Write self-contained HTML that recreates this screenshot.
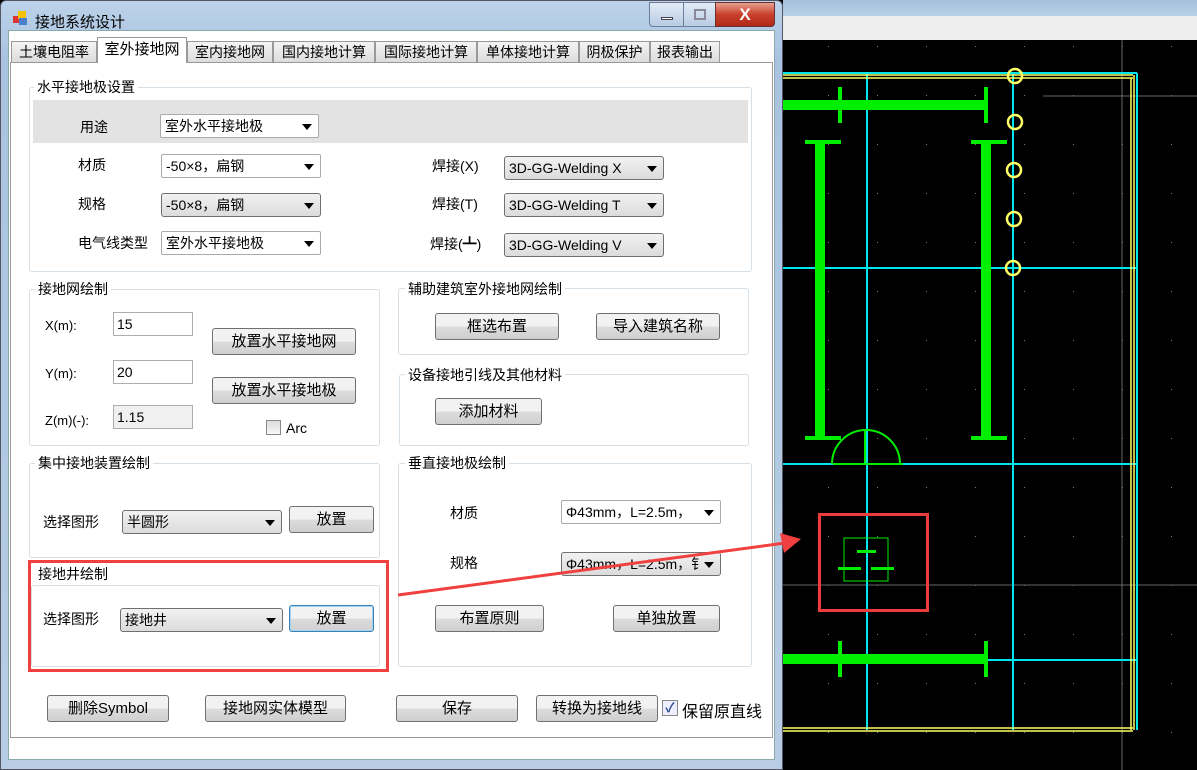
<!DOCTYPE html>
<html><head><meta charset="utf-8">
<style>
*{box-sizing:border-box;margin:0;padding:0}
body{width:1197px;height:770px;position:relative;overflow:hidden;background:#000;font-family:"Liberation Sans","Noto Sans CJK SC",sans-serif;font-size:14px;color:#000}
.a{position:absolute}
.win{left:0;top:0;width:783px;height:770px;background:linear-gradient(#bcd2ea,#a9c3e0 60px,#b8cde4);border:1px solid #556;border-radius:6px 6px 0 0}
.client{left:8px;top:30px;width:767px;height:730px;background:#fff;border:1px solid #8aa}
.page{left:10px;top:62px;width:763px;height:676px;background:#fff;border:1px solid #999}
.tab{top:41px;height:22px;background:linear-gradient(#f4f4f4,#dcdcdc);border:1px solid #999;font-size:14px;text-align:center;line-height:20px}
.tab.sel{top:37px;height:26px;background:#fff;border-bottom:none;line-height:24px}
.grp{border:1px solid #d5dfe5;border-radius:3px}
.gl{background:#fff;padding:0 3px;font-size:14px;line-height:16px}
.lbl{font-size:14px;line-height:16px}
.cb{height:24px;border:1px solid #aaa;border-radius:2px;background:#fff;font-size:14px;line-height:22px;padding-left:4px;white-space:nowrap;overflow:hidden}
.cb.g{background:linear-gradient(#f2f2f2,#dcdcdc);border-color:#707070;border-radius:3px}
.cb:after{content:"";position:absolute;right:6px;top:9px;border-left:5px solid transparent;border-right:5px solid transparent;border-top:6px solid #000}
.btn{height:27px;border:1px solid #707070;border-radius:3px;background:linear-gradient(#f2f2f2 50%,#dddddd 50%,#cfcfcf);font-size:15px;text-align:center;line-height:25px;white-space:nowrap}
.in{height:24px;border:1px solid #abadb3;background:#fff;font-size:14px;line-height:22px;padding-left:3px}
</style></head><body>
<div class="a" style="left:783px;top:0;width:414px;height:16px;background:linear-gradient(#a7c0dc,#b8cfe8)"></div>
<div class="a" style="left:783px;top:16px;width:414px;height:24px;background:#eeeeee"></div>

<svg class="a" style="left:783px;top:40px" width="414" height="730">
<g id="dots" fill="#777"></g>
<line x1="339" y1="0" x2="339" y2="730" stroke="#666"/>
<line x1="260" y1="56" x2="414" y2="56" stroke="#666"/>
<line x1="0" y1="545" x2="414" y2="545" stroke="#666"/>
<g stroke="#00e5ee" stroke-width="2">
<line x1="0" y1="33" x2="354" y2="33"/>
<line x1="0" y1="228" x2="354" y2="228"/>
<line x1="0" y1="424" x2="354" y2="424"/>
<line x1="0" y1="620" x2="354" y2="620"/>
<line x1="84" y1="33" x2="84" y2="690"/>
<line x1="230" y1="33" x2="230" y2="690"/>
<line x1="354" y1="33" x2="354" y2="690"/>
</g>
<g stroke="#ffff66" stroke-width="1.5" fill="none">
<line x1="0" y1="35" x2="350" y2="35"/><line x1="0" y1="38" x2="350" y2="38"/>
<line x1="348" y1="38" x2="348" y2="690"/><line x1="351" y1="35" x2="351" y2="690"/>
<line x1="0" y1="688" x2="350" y2="688"/><line x1="0" y1="691" x2="350" y2="691"/>
<circle cx="232" cy="36" r="7" stroke-width="2.5"/><circle cx="232" cy="82" r="7" stroke-width="2.5"/><circle cx="231" cy="130" r="7" stroke-width="2.5"/><circle cx="231" cy="179" r="7" stroke-width="2.5"/><circle cx="230" cy="228" r="7" stroke-width="2.5"/>
</g>
<g fill="#00ee00">
<rect x="0" y="60" width="205" height="10"/>
<rect x="32" y="102" width="10" height="296"/>
<rect x="198" y="102" width="10" height="296"/>
<rect x="0" y="614" width="205" height="10"/>
<rect x="22" y="100" width="36" height="4"/><rect x="188" y="100" width="36" height="4"/>
<rect x="22" y="396" width="36" height="4"/><rect x="188" y="396" width="36" height="4"/>
<rect x="55" y="47" width="4" height="36"/><rect x="201" y="47" width="4" height="36"/>
<rect x="55" y="601" width="4" height="36"/><rect x="201" y="601" width="4" height="36"/>
<rect x="81" y="390" width="2" height="34"/><rect x="50" y="423" width="70" height="2"/>
</g>
<path d="M49 424 A34 34 0 0 1 117 424" stroke="#00ee00" stroke-width="2" fill="none"/>
<rect x="61" y="498" width="44" height="43" stroke="#00ee00" fill="none"/>
<rect x="74" y="510" width="19" height="3" fill="#00ee00"/>
<rect x="55" y="527" width="23" height="3" fill="#00ee00"/><rect x="88" y="527" width="23" height="3" fill="#00ee00"/>
<rect x="36.5" y="474.5" width="108" height="96" stroke="#ee3b3b" stroke-width="3" fill="none"/>
</svg>

<div class="a win"></div>
<div class="a" style="left:12px;top:10px;width:16px;height:16px">
<div class="a" style="left:1px;top:6px;width:7px;height:7px;background:#d33"></div>
<div class="a" style="left:6px;top:1px;width:8px;height:8px;background:#f2c200"></div>
<div class="a" style="left:7px;top:8px;width:8px;height:7px;background:#4a7fd0"></div>
</div>
<div class="a" style="left:35px;top:11px;font-size:15px">接地系统设计</div>
<div class="a" style="left:649px;top:2px;width:35px;height:25px;border:1px solid #6a7d99;border-radius:0 0 0 4px;background:linear-gradient(#e3ecf7,#b8cbe3)"><div class="a" style="left:11px;top:14px;width:12px;height:3px;background:#fff;border:1px solid #445"></div></div>
<div class="a" style="left:683px;top:2px;width:33px;height:25px;border:1px solid #6a7d99;background:linear-gradient(#e3ecf7,#b8cbe3)"><div class="a" style="left:10px;top:6px;width:12px;height:11px;border:2px solid #889"></div></div>
<div class="a" style="left:715px;top:2px;width:60px;height:25px;border:1px solid #6a3030;border-radius:0 0 4px 0;background:linear-gradient(#e8a090,#c8402c 50%,#b02818);color:#fff;font-weight:bold;font-size:17px;text-align:center;line-height:23px">X</div>

<div class="a client"></div>
<div class="a page"></div>
<div class="a tab" style="left:11px;width:86px">土壤电阻率</div>
<div class="a tab" style="left:187px;width:86px">室内接地网</div>
<div class="a tab" style="left:273px;width:102px">国内接地计算</div>
<div class="a tab" style="left:375px;width:102px">国际接地计算</div>
<div class="a tab" style="left:477px;width:102px">单体接地计算</div>
<div class="a tab" style="left:579px;width:71px">阴极保护</div>
<div class="a tab" style="left:650px;width:70px">报表输出</div>
<div class="a tab sel" style="left:97px;width:90px;font-size:15px">室外接地网</div>

<div class="a grp" style="left:29px;top:87px;width:723px;height:185px"></div>
<div class="a gl" style="left:34px;top:79px">水平接地极设置</div>
<div class="a" style="left:33px;top:100px;width:715px;height:43px;background:#e3e3e3"></div>
<div class="a lbl" style="left:80px;top:119px">用途</div>
<div class="a cb" style="left:160px;top:114px;width:159px">室外水平接地极</div>
<div class="a lbl" style="left:78px;top:157px">材质</div>
<div class="a cb" style="left:161px;top:154px;width:160px">-50×8，扁钢</div>
<div class="a lbl" style="left:78px;top:196px">规格</div>
<div class="a cb g" style="left:161px;top:193px;width:160px">-50×8，扁钢</div>
<div class="a lbl" style="left:78px;top:235px">电气线类型</div>
<div class="a cb" style="left:161px;top:231px;width:160px">室外水平接地极</div>
<div class="a lbl" style="left:432px;top:158px">焊接(X)</div>
<div class="a cb g" style="left:504px;top:156px;width:160px">3D-GG-Welding X</div>
<div class="a lbl" style="left:432px;top:196px">焊接(T)</div>
<div class="a cb g" style="left:504px;top:193px;width:160px">3D-GG-Welding T</div>
<div class="a lbl" style="left:430px;top:236px">焊接(┻)</div>
<div class="a cb g" style="left:504px;top:233px;width:160px">3D-GG-Welding V</div>

<div class="a grp" style="left:29px;top:289px;width:351px;height:157px"></div>
<div class="a gl" style="left:35px;top:281px">接地网绘制</div>
<div class="a lbl" style="left:45px;top:318px;font-size:13px">X(m):</div>
<div class="a in" style="left:113px;top:312px;width:80px">15</div>
<div class="a lbl" style="left:45px;top:366px;font-size:13px">Y(m):</div>
<div class="a in" style="left:113px;top:360px;width:80px">20</div>
<div class="a lbl" style="left:45px;top:413px;font-size:13px">Z(m)(-):</div>
<div class="a in" style="left:113px;top:405px;width:80px;background:#f0f0f0">1.15</div>
<div class="a btn" style="left:212px;top:328px;width:144px">放置水平接地网</div>
<div class="a btn" style="left:212px;top:377px;width:144px">放置水平接地极</div>
<div class="a" style="left:266px;top:420px;width:15px;height:15px;border:1px solid #888;background:linear-gradient(#ddd,#f8f8f8)"></div>
<div class="a lbl" style="left:286px;top:420px">Arc</div>

<div class="a grp" style="left:398px;top:288px;width:351px;height:67px"></div>
<div class="a gl" style="left:405px;top:281px">辅助建筑室外接地网绘制</div>
<div class="a btn" style="left:435px;top:313px;width:124px">框选布置</div>
<div class="a btn" style="left:596px;top:313px;width:124px">导入建筑名称</div>

<div class="a grp" style="left:399px;top:374px;width:350px;height:72px"></div>
<div class="a gl" style="left:405px;top:367px">设备接地引线及其他材料</div>
<div class="a btn" style="left:435px;top:398px;width:107px">添加材料</div>

<div class="a grp" style="left:398px;top:463px;width:354px;height:204px"></div>
<div class="a gl" style="left:405px;top:455px">垂直接地极绘制</div>
<div class="a lbl" style="left:450px;top:505px">材质</div>
<div class="a cb" style="left:561px;top:500px;width:160px">Φ43mm，L=2.5m，</div>
<div class="a lbl" style="left:450px;top:555px">规格</div>
<div class="a cb g" style="left:561px;top:552px;width:160px">Φ43mm，L=2.5m，钅</div>
<div class="a btn" style="left:435px;top:605px;width:109px">布置原则</div>
<div class="a btn" style="left:613px;top:605px;width:107px">单独放置</div>

<div class="a grp" style="left:29px;top:463px;width:351px;height:95px"></div>
<div class="a gl" style="left:35px;top:455px">集中接地装置绘制</div>
<div class="a lbl" style="left:43px;top:514px">选择图形</div>
<div class="a cb g" style="left:122px;top:510px;width:160px">半圆形</div>
<div class="a btn" style="left:289px;top:506px;width:85px">放置</div>

<div class="a grp" style="left:31px;top:585px;width:349px;height:82px"></div>
<div class="a gl" style="left:35px;top:566px">接地井绘制</div>
<div class="a lbl" style="left:43px;top:611px">选择图形</div>
<div class="a cb g" style="left:120px;top:608px;width:163px">接地井</div>
<div class="a btn" style="left:289px;top:605px;width:85px;border-color:#3c7fb1;box-shadow:inset 0 0 0 1px #9fd5f5">放置</div>
<div class="a" style="left:28px;top:560px;width:361px;height:112px;border:3px solid #f04040"></div>

<div class="a btn" style="left:47px;top:695px;width:122px">删除Symbol</div>
<div class="a btn" style="left:205px;top:695px;width:141px">接地网实体模型</div>
<div class="a btn" style="left:396px;top:695px;width:122px">保存</div>
<div class="a btn" style="left:536px;top:695px;width:122px">转换为接地线</div>
<div class="a" style="left:662px;top:700px;width:16px;height:16px;border:1px solid #888;background:#eef;color:#2a4a8a;font-size:13px;line-height:14px;text-align:center;font-weight:bold">✓</div>
<div class="a" style="left:682px;top:698px;font-size:16px">保留原直线</div>

<svg class="a" style="left:0;top:0" width="1197" height="770">
<line x1="398" y1="595" x2="785" y2="543" stroke="#f04040" stroke-width="3"/>
<polygon points="780,533 801,539 784,553" fill="#f04040"/>
</svg>
<script>
var g=document.getElementById('dots'),s='';
for(var y=6;y<730;y+=49)for(var x=45;x<414;x+=49){s+='<rect x="'+x+'" y="'+y+'" width="1" height="1"/>';}
g.innerHTML=s;
</script>
</body></html>
